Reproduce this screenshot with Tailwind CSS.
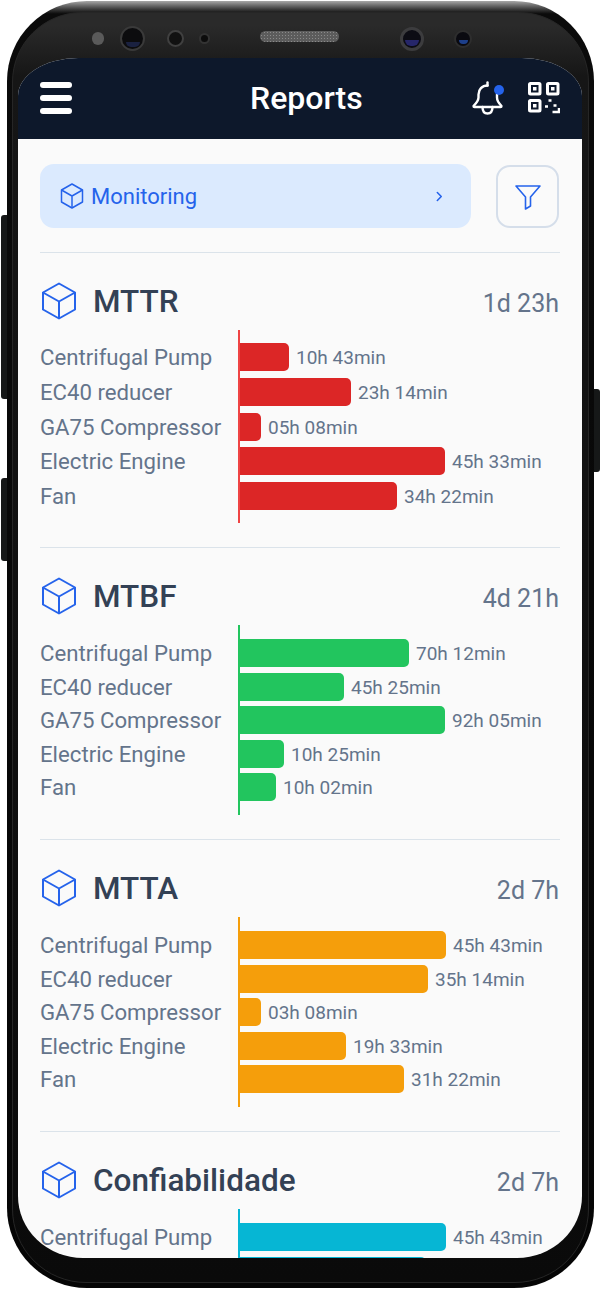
<!DOCTYPE html>
<html lang="en">
<head>
  <meta charset="UTF-8">
  <meta name="viewport" content="width=device-width, initial-scale=1.0">
  <title>Reports</title>
  <script src="https://cdn.jsdelivr.net/npm/@tailwindcss/browser@4"></script>
</head>
<body class="bg-white font-['Roboto',sans-serif]">
  <div class="relative w-[601px] h-[1290px] overflow-hidden bg-white">
    <!-- Side buttons -->
    <div class="absolute left-[1px] top-[215px] w-[10px] h-[184px] rounded-l-[3px] bg-[#161818]"></div>
    <div class="absolute left-[1px] top-[478px] w-[10px] h-[83px] rounded-l-[3px] bg-[#161818]"></div>
    <div class="absolute left-[590px] top-[389px] w-[10px] h-[83px] rounded-r-[3px] bg-[#161818]"></div>

    <!-- Phone body -->
    <div class="absolute left-[7px] top-[1px] w-[587px] h-[1287px] rounded-[80px] bg-gradient-to-b from-[#a8a8a8] via-[#0b0b0b] via-[1%] to-[#050505]"></div>
    <div class="absolute left-[12px] top-[12px] w-[577px] h-[1271px] rounded-t-[70px] rounded-b-[74px] bg-gradient-to-b from-[#2a2a2a] from-[1%] via-[#161616] via-[5%] to-[#0a0a0a] border border-[#262626]"></div>

    <!-- Sensors and speaker -->
    <div class="absolute left-[92px] top-[32px] w-[12px] h-[13px] rounded-full bg-[#5a5a5a]"></div>
    <div class="absolute left-[120px] top-[26px] w-[25px] h-[25px] rounded-full border-2 border-[#3a3a3a] bg-[#0c0c0e] flex items-end justify-center"><div class="w-[14px] h-[5px] mb-[2px] rounded-b-full bg-[#1a2140]"></div></div>
    <div class="absolute left-[167px] top-[30px] w-[17px] h-[17px] rounded-full border-2 border-[#404040] bg-[#111]"></div>
    <div class="absolute left-[199px] top-[33px] w-[11px] h-[11px] rounded-full border-2 border-[#333] bg-[#0c0c0c]"></div>
    <div class="absolute left-[260px] top-[31px] w-[79px] h-[11px] rounded-full bg-[radial-gradient(#8a8a8a_1px,#5c5c5c_1px)] bg-[length:3px_3px]"></div>
    <div class="absolute left-[400px] top-[27px] w-[24px] h-[24px] rounded-full border-[3px] border-[#3c3c3e] bg-[#0c0c14] flex items-end justify-center"><div class="w-[14px] h-[6px] mb-[2px] rounded-b-full bg-[#26266a]"></div></div>
    <div class="absolute left-[454px] top-[30px] w-[18px] h-[18px] rounded-full border-2 border-[#2e2e2e] bg-[#0a0a10] flex items-end justify-center"><div class="w-[9px] h-[4px] mb-[2px] rounded-b-full bg-[#1d3f8a]"></div></div>

    <!-- Screen -->
    <div class="absolute left-[18px] top-[58px] w-[564px] h-[1200px] rounded-[60px_60px_65px_65px/38px_38px_62px_62px] overflow-hidden bg-[#fafafa]">
      <header class="h-[81px] bg-[#0d182b] pl-[22px] pr-[22px] flex items-center justify-between relative">
        <div class="w-[32px] flex flex-col gap-[7px] -mt-[2px]">
          <span class="block h-[6px] rounded-full bg-white"></span>
          <span class="block h-[6px] rounded-full bg-white"></span>
          <span class="block h-[6px] rounded-full bg-white"></span>
        </div>
        <h1 class="absolute left-[232px] top-[20px] text-[32px] leading-[40px] font-medium text-white">Reports</h1>
        <div class="flex items-center gap-[24px] -mt-[2px]">
          <div class="relative w-[32px] h-[34px]">
            <svg viewBox="0 0 32 34" class="w-[32px] h-[34px]" fill="none" stroke="white" stroke-width="2.400" stroke-linecap="round" stroke-linejoin="round">
              <path d="M15.500 1.500v3"/>
              <path d="M15.500 4.500c-5.500 0-9 4-9 9v3c0 3.500-3 6.500-5 8.500 0 .8.400 1 1 1h26c.6 0 1-.2 1-1-2-2-4.500-4.500-4.500-8.500v-3"/>
              <path d="M10.500 26c0 4 2 6.500 5 6.500s5-2.500 5-6.500"/>
            </svg>
            <span class="absolute right-[0px] top-[4px] w-[10px] h-[10px] rounded-full bg-[#2563eb]"></span>
          </div>
          <svg viewBox="0 0 32 32" class="w-[32px] h-[32px]" fill="none" stroke="white" stroke-width="3">
            <rect x="1.500" y="1.500" width="10.500" height="10.500" rx="1"/>
            <rect x="19.500" y="1.500" width="10.500" height="10.500" rx="1"/>
            <rect x="1.500" y="18.500" width="10.500" height="10.500" rx="1"/>
            <rect x="5" y="5" width="3.500" height="3.500" fill="white" stroke="none"/>
            <rect x="23" y="5" width="3.500" height="3.500" fill="white" stroke="none"/>
            <rect x="5" y="22" width="3.500" height="3.500" fill="white" stroke="none"/>
            <path d="M20.500 18.500h3M17 24.500h3M25.500 23.500h3M24.500 30h6.500v-4" stroke-width="2.500"/>
          </svg>
        </div>
      </header>

      <main class="px-[22px]">
        <div class="flex justify-between pt-[25px] pb-[24px]">
          <div class="w-[431px] h-[64px] rounded-[14px] bg-[#dbeafe] flex items-center pl-[20px] pr-[28px] text-[#2563eb]">
            <svg viewBox="0 0 24 26" class="w-[24px] h-[26px]" fill="none" stroke="currentColor" stroke-width="1.500" stroke-linejoin="round">
              <path d="M12 1l10.500 6v12l-10.500 6-10.500-6v-12z"/>
              <path d="M1.500 7l10.500 6 10.500-6M12 13v12"/>
            </svg>
            <span class="ml-[7px] mt-[1px] text-[22px] leading-[28px] flex-1">Monitoring</span>
            <svg viewBox="0 0 8 12" class="w-[7px] h-[11px]" fill="none" stroke="currentColor" stroke-width="1.800" stroke-linecap="round" stroke-linejoin="round"><path d="M1.500 1.500l4.500 4.500-4.500 4.500"/></svg>
          </div>
          <div class="w-[63px] h-[63px] mt-[1px] mr-[1px] rounded-[14px] border-2 border-[#d5deea] flex items-center justify-center">
            <svg viewBox="0 0 26 26" class="w-[26px] h-[26px]" fill="none" stroke="#2563eb" stroke-width="1.600" stroke-linejoin="round">
              <path d="M1 2h24l-9.500 11v9l-5 3v-12z"/>
            </svg>
          </div>
        </div>
        <div id="sections"></div>
      </main>
    </div>
  </div>

  <script>
    const cube = `<svg viewBox="0 0 36 38" class="w-[36px] h-[38px] ml-[1px] -mt-[1px]" fill="none" stroke="#2563eb" stroke-width="2" stroke-linejoin="round"><path d="M18 1.500l16 9v17l-16 9-16-9v-17z"/><path d="M2 10.500l16 9 16-9M18 19.500v17"/></svg>`;

    const reports = [
      { title: 'MTTR', total: '1d 23h', bar: 'bg-[#dc2626]', axis: 'border-[#ef4444]', rows: 'gap-[6.75px]', pad: 'py-[13px]', data: [['Centrifugal Pump', 50, '10h 43min'], ['EC40 reducer', 112, '23h 14min'], ['GA75 Compressor', 22, '05h 08min'], ['Electric Engine', 206, '45h 33min'], ['Fan', 158, '34h 22min']] },
      { title: 'MTBF', total: '4d 21h', bar: 'bg-[#22c55e]', axis: 'border-[#22c55e]', rows: 'gap-[5.5px]', pad: 'py-[14px]', data: [['Centrifugal Pump', 170, '70h 12min'], ['EC40 reducer', 105, '45h 25min'], ['GA75 Compressor', 206, '92h 05min'], ['Electric Engine', 45, '10h 25min'], ['Fan', 37, '10h 02min']] },
      { title: 'MTTA', total: '2d 7h', bar: 'bg-[#f59e0b]', axis: 'border-[#f59e0b]', rows: 'gap-[5.5px]', pad: 'py-[14px]', data: [['Centrifugal Pump', 207, '45h 43min'], ['EC40 reducer', 189, '35h 14min'], ['GA75 Compressor', 22, '03h 08min'], ['Electric Engine', 107, '19h 33min'], ['Fan', 165, '31h 22min']] },
      // the rest of this card is under the phone's bezel, only the top of its second bar shows
      { title: 'Confiabilidade', total: '2d 7h', bar: 'bg-[#06b6d4]', axis: 'border-[#06b6d4]', rows: 'gap-[5.5px]', pad: 'py-[14px]', data: [['Centrifugal Pump', 207, '45h 43min'], ['', 187, '']] }
    ];

    document.getElementById('sections').innerHTML = reports.map(r => `
      <section class="border-t border-[#dbe3ea] pt-[30px] pb-[24px]">
        <div class="h-[37px] mb-[10px] flex items-center">
          ${cube}
          <h2 class="ml-[16px] flex-1 text-[31.5px] leading-[36px] font-medium text-[#334155]">${r.title}</h2>
          <span class="text-[25px] leading-[36px] text-[#64748b] mt-[4px] mr-[1px]">${r.total}</span>
        </div>
        <div class="flex">
          <div class="w-[198px] flex flex-col ${r.rows} ${r.pad}">
            ${r.data.map(d => `<div class="h-[28px] text-[22.2px] leading-[28px] text-[#64748b] whitespace-nowrap">${d[0]}</div>`).join('')}
          </div>
          <div class="flex flex-col border-l-2 ${r.axis} ${r.rows} ${r.pad}">
            ${r.data.map(d => `<div class="h-[28px] flex items-center"><div class="h-[28px] rounded-r-[5px] ${r.bar}" style="width:${d[1] - 1}px"></div><span class="ml-[7px] mt-[2px] text-[19px] leading-[28px] text-[#64748b] whitespace-nowrap">${d[2]}</span></div>`).join('')}
          </div>
        </div>
      </section>`).join('');
  </script>
</body>
</html>
